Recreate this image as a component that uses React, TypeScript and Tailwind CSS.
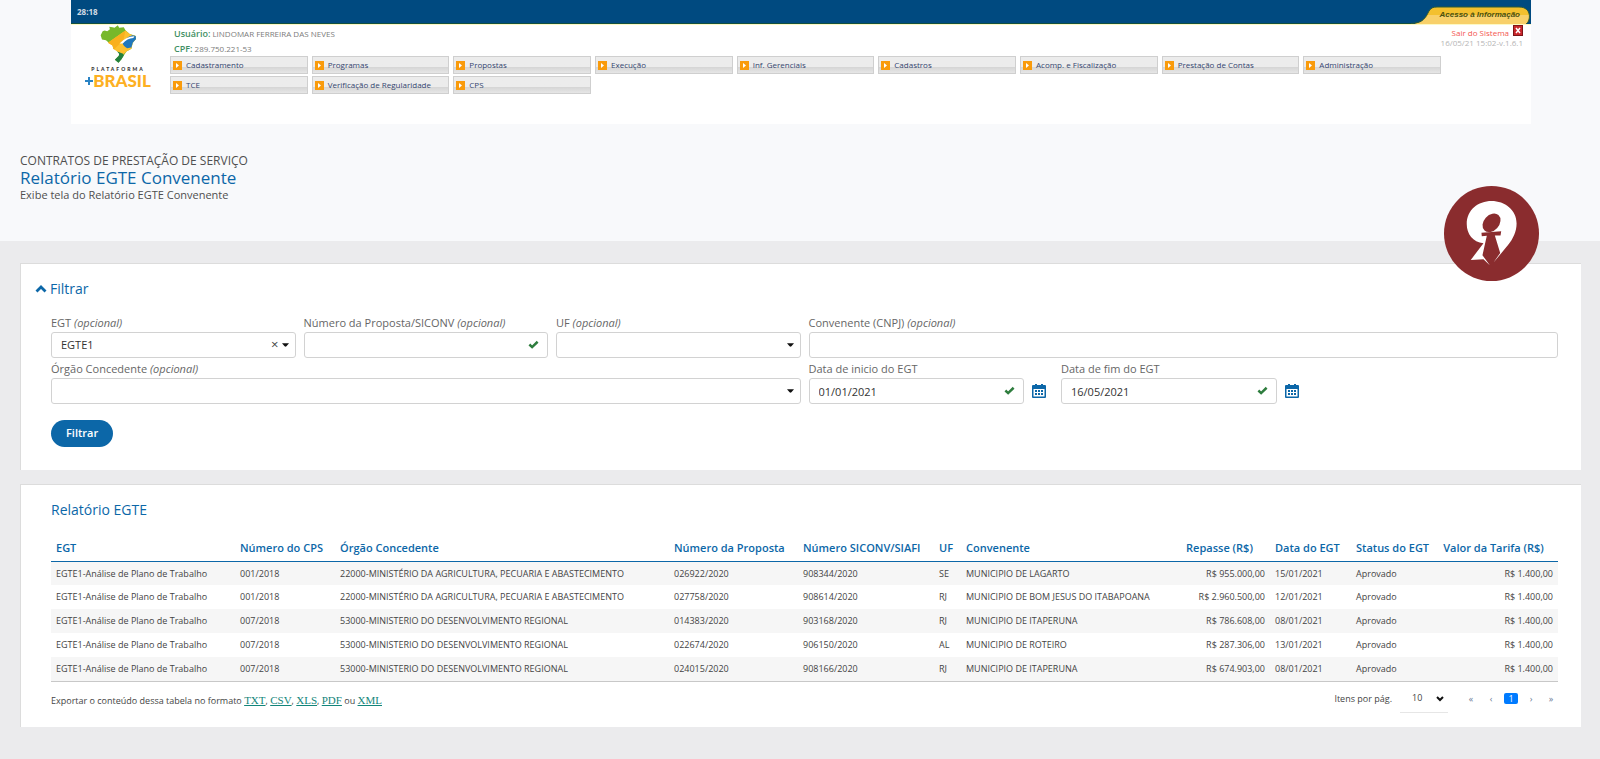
import React, { useState } from "react";

type FieldProps = {
  id: string;
  label: string;
  optional?: boolean;
  className?: string;
  children: React.ReactNode;
};

const menuItems = [
  "Cadastramento",
  "Programas",
  "Propostas",
  "Execução",
  "Inf. Gerenciais",
  "Cadastros",
  "Acomp. e Fiscalização",
  "Prestação de Contas",
  "Administração",
  "TCE",
  "Verificação de Regularidade",
  "CPS",
];

const agricultura = "22000-MINISTÉRIO DA AGRICULTURA, PECUARIA E ABASTECIMENTO";
const regional = "53000-MINISTERIO DO DESENVOLVIMENTO REGIONAL";

const rows = [
  { cps: "001/2018", orgao: agricultura, proposta: "026922/2020", siafi: "908344/2020", uf: "SE", convenente: "MUNICIPIO DE LAGARTO", repasse: "R$ 955.000,00", data: "15/01/2021" },
  { cps: "001/2018", orgao: agricultura, proposta: "027758/2020", siafi: "908614/2020", uf: "RJ", convenente: "MUNICIPIO DE BOM JESUS DO ITABAPOANA", repasse: "R$ 2.960.500,00", data: "12/01/2021" },
  { cps: "007/2018", orgao: regional, proposta: "014383/2020", siafi: "903168/2020", uf: "RJ", convenente: "MUNICIPIO DE ITAPERUNA", repasse: "R$ 786.608,00", data: "08/01/2021" },
  { cps: "007/2018", orgao: regional, proposta: "022674/2020", siafi: "906150/2020", uf: "AL", convenente: "MUNICIPIO DE ROTEIRO", repasse: "R$ 287.306,00", data: "13/01/2021" },
  { cps: "007/2018", orgao: regional, proposta: "024015/2020", siafi: "908166/2020", uf: "RJ", convenente: "MUNICIPIO DE ITAPERUNA", repasse: "R$ 674.903,00", data: "08/01/2021" },
];

const inputClass =
  "block h-[26px] w-full appearance-none rounded-[3px] border border-[#d2d2d2] bg-white px-[9px] text-[11px] text-[#333333] outline-none";

const BrasilLogo: React.FC = () => (
  <div className="flex w-16 flex-col items-center">
    <svg viewBox="78 12 112 115" className="h-[38px] w-[37px]">
      <path
        d="M80 43 86 31 92 29 100 31 108 25 106 17 116 19 122 20 132 13 136 20 150 19 155 28 168 39 186 45 187 54 177 66 173 84 158 92 150 104 143 116 134 126 123 117 135 105 136 99 128 88 118 84 116 72 104 65 96 58 84 56Z"
        fill="#77b82a"
      />
      <path d="M155 29 168 39 186 45 187 54 177 66 173 84 158 92 148 102 130 92 118 84 116 74 102 66Z" fill="#fdc02f" />
      <path d="M155 29 149 58 120 86 116 74 102 66Z" fill="#f9b01e" />
      <path d="M136 99 130 92 148 99 150 104 143 116 134 126 123 117 135 105Z" fill="#23803f" />
      <path d="M186 45 187 54 177 66 173 80 160 82Q148 76 146 66 156 50 176 43Z" fill="#1f77bd" />
      <path d="M137 68Q156 47 182 46L179 51Q160 52 147 68Z" fill="#ffffff" />
    </svg>
    <span className="mt-[3px] font-['Lato',sans-serif] text-[5px] leading-[7px] font-black tracking-[2px] text-[#333333]">
      PLATAFORMA
    </span>
    <span className="flex items-center font-['Lato',sans-serif] text-[17px] leading-[15px] font-black text-[#fdb022]">
      <svg viewBox="0 0 8 8" className="h-2 w-2">
        <path d="M3 0h2v3h3v2H5v3H3V5H0V3h3z" fill="#2a83c4" />
      </svg>
      BRASIL
    </span>
  </div>
);

const MenuArrow: React.FC = () => (
  <svg viewBox="0 0 9 9" className="h-[9px] w-[9px] shrink-0">
    <rect width="9" height="9" fill="#f99b0c" />
    <path d="M3 2 6 4.500 3 7Z" fill="#ffffff" />
  </svg>
);

const Caret: React.FC = () => (
  <svg viewBox="0 0 8 4" className="pointer-events-none absolute right-[7px] bottom-[11px] h-1 w-[7px]">
    <path d="M0 0h8L5 3.500Q4 4.300 3 3.500Z" fill="#111111" />
  </svg>
);

const Check: React.FC = () => (
  <svg viewBox="0 0 12 9" className="pointer-events-none absolute right-[9px] bottom-[9px] h-[9px] w-[11px]">
    <path d="M1.500 4.500 4.500 7.300 10.500 1.500" fill="none" stroke="#2e7d3e" strokeWidth="2.700" />
  </svg>
);

const CalendarIcon: React.FC = () => (
  <svg viewBox="0 0 14 14" className="h-[14px] w-[14px]">
    <path
      d="M3 0h2v1h4V0h2v1h2q1 0 1 1v11q0 1-1 1H1q-1 0-1-1V2q0-1 1-1h2zM1.500 5v7.500h11V5z"
      fill="#0c67a8"
      fillRule="evenodd"
    />
    <path d="M3 6h2v2H3zM6 6h2v2H6zM9 6h2v2H9zM3 9h2v2H3zM6 9h2v2H6zM9 9h2v2H9z" fill="#0c67a8" />
  </svg>
);

const Field: React.FC<FieldProps> = ({ id, label, optional, className, children }) => (
  <div className={className}>
    <label htmlFor={id} className="block text-[11px] leading-[18px] text-[#666666]">
      {label} {optional && <em>(opcional)</em>}
    </label>
    {children}
  </div>
);

const DateField: React.FC<{ id: string; label: string; value: string }> = ({ id, label, value }) => (
  <Field id={id} label={label}>
    <div className="flex items-center gap-2">
      <div className="relative flex-1">
        <input id={id} defaultValue={value} className={inputClass} />
        <Check />
      </div>
      <button type="button" aria-label={"Calendário " + label} className="mr-[7px]">
        <CalendarIcon />
      </button>
    </div>
  </Field>
);

const Badge: React.FC = () => (
  <svg viewBox="0 0 284 284" className="absolute -top-[55px] right-[61px] h-[95px] w-[95px]">
    <circle cx="142" cy="142" r="142" fill="#8a2c2e" />
    <path
      d="M142 45C182 45 217 72 217 112 217 136 206 158 192 176L148 229 168 200 152 148 169 148 171 135 112 140 113 150 128 149 115 207 137 237 118 219 80 221 118 171C86 168 68 142 68 114 68 72 102 45 142 45Z"
      fill="#ffffff"
    />
    <ellipse cx="142" cy="110" rx="23" ry="31" transform="rotate(42 142 110)" fill="#8a2c2e" />
  </svg>
);

const ExportLink: React.FC<{ children: React.ReactNode }> = ({ children }) => (
  <a href="#exportar" className="font-['Liberation_Serif',serif] text-[11px] text-[#12857a] underline">
    {children}
  </a>
);

const App: React.FC = () => {
  const [egt, setEgt] = useState("EGTE1");

  return (
    <div className="min-h-screen bg-[#ebebed] font-['Open_Sans',sans-serif] text-[#444444]">
      <header className="h-[241px] bg-[#f8f9fb] pr-[69px] pl-[71px]">
        {/* System bar */}
        <div className="flex h-[25px] items-end justify-between border-b border-[#fdf9c4] bg-[#004a80]">
          <span className="flex h-6 flex-1 items-center border-b border-[#14503f] pl-[6px] text-[8px] font-bold text-[#d5dde5]">
            28:18
          </span>
          <a href="#acesso" className="relative flex h-[18px] w-[120px] items-center justify-end pr-[11px]">
            <svg viewBox="0 0 120 18" className="absolute inset-0 h-full w-full">
              <path d="M4 17.500C12 17 15 11 18 5 20 2 22 1 26 1H108C121 1 120 15 115 18H4Z" fill="#f3c02e" />
              <path d="M6 17.500C12 16 15 12 17 9H118Q118 15 115 18H4Z" fill="#f8d06a" />
              <path d="M0 17.500C12 17 15 11 18 5 20 2 22 1 26 1H108C121 1 120 15 115 18" fill="none" stroke="#2f5b34" />
            </svg>
            <span className="relative font-['Liberation_Sans',sans-serif] text-[8px] font-bold text-[#4a5010] italic">
              Acesso à Informação
            </span>
          </a>
        </div>

        {/* Logo, user and menu */}
        <div className="flex h-[99px] bg-white pl-[15px]">
          <BrasilLogo />
          <div className="ml-5 flex-1">
            <div className="flex h-[31px] justify-between">
              <div className="pt-px pl-1 text-[8px] leading-[15px] text-[#7c7c7c]">
                <p>
                  <span className="text-[9px] font-semibold text-[#3f8f63]">Usuário:</span> LINDOMAR FERREIRA DAS
                  NEVES
                </p>
                <p>
                  <span className="text-[9px] font-semibold text-[#3f8f63]">CPF:</span> 289.750.221-53
                </p>
              </div>
              <div className="pr-2 text-right text-[8px] leading-[10px]">
                <a href="#sair" className="flex items-end justify-end gap-1 text-[#f4574f]">
                  Sair do Sistema
                  <svg viewBox="0 0 10 11" className="mb-0.5 h-[11px] w-[10px]">
                    <rect width="10" height="11" fill="#7c1518" />
                    <rect x="1" y="1" width="8" height="9" fill="#c8262b" />
                    <path d="M3 3 7 8M7 3 3 8" stroke="#ffffff" strokeWidth="1.500" />
                  </svg>
                </a>
                <span className="block text-[#b5b5b5]">16/05/21 15:02-v.1.6.1</span>
              </div>
            </div>
            <nav className="mr-[90px] grid grid-cols-9 gap-x-1 gap-y-0.5">
              {menuItems.map((item) => (
                <a
                  key={item}
                  href="#menu"
                  className="flex h-[18px] items-center gap-1 border border-[#cfcfcf] bg-linear-to-b from-[#ececec] from-60% via-[#d6d6d6] via-65% to-[#e6e6e6] pl-[2px] text-[8px] whitespace-nowrap text-[#34456f]"
                >
                  <MenuArrow />
                  {item}
                </a>
              ))}
            </nav>
          </div>
        </div>
      </header>

      {/* Page title, drawn over the lower part of the header */}
      <div className="relative -mt-[88px] h-[88px] pl-5">
        <p className="text-[12px] leading-4 text-[#4f4f4f]">CONTRATOS DE PRESTAÇÃO DE SERVIÇO</p>
        <h1 className="text-[17px] leading-[18px] text-[#0c67a8]">Relatório EGTE Convenente</h1>
        <p className="text-[11px] leading-4 text-[#4f4f4f]">Exibe tela do Relatório EGTE Convenente</p>
        <div className="absolute right-0 bottom-0">
          <Badge />
        </div>
      </div>

      <main className="flex flex-col gap-[14px] pt-[22px] pr-[19px] pb-8 pl-5">
        {/* Filter */}
        <section className="h-[207px] border-t border-l border-[#dcdcdc] bg-white pr-[23px] pl-[30px]">
          <h2 className="-ml-4 pt-[15px]">
            <button type="button" className="flex items-center gap-[3px] text-[14px] leading-5 text-[#0c67a8]">
              <svg viewBox="0 0 12 8" className="h-2 w-3">
                <path d="M1.500 6.500 6 2 10.500 6.500" fill="none" stroke="#0c67a8" strokeWidth="2.800" />
              </svg>
              Filtrar
            </button>
          </h2>
          <form className="mt-[15px]" onSubmit={(e) => e.preventDefault()}>
            <div className="grid grid-cols-6 gap-x-2 gap-y-0.5">
              <Field id="egt" label="EGT" optional>
                <div className="relative">
                  <select id="egt" value={egt} onChange={(e) => setEgt(e.target.value)} className={inputClass}>
                    <option value="">&nbsp;</option>
                    <option value="EGTE1">EGTE1</option>
                  </select>
                  <button
                    type="button"
                    onClick={() => setEgt("")}
                    className="absolute top-[5px] right-[17px] text-[13px] leading-[14px]"
                  >
                    ×
                  </button>
                  <Caret />
                </div>
              </Field>
              <Field id="proposta" label="Número da Proposta/SICONV" optional>
                <div className="relative">
                  <input id="proposta" className={inputClass} />
                  <Check />
                </div>
              </Field>
              <Field id="uf" label="UF" optional>
                <div className="relative">
                  <select id="uf" className={inputClass} />
                  <Caret />
                </div>
              </Field>
              <Field id="cnpj" label="Convenente (CNPJ)" optional className="col-span-3">
                <input id="cnpj" className={inputClass} />
              </Field>
              <Field id="orgao" label="Órgão Concedente" optional className="col-span-3">
                <div className="relative">
                  <select id="orgao" className={inputClass} />
                  <Caret />
                </div>
              </Field>
              <DateField id="inicio" label="Data de inicio do EGT" value="01/01/2021" />
              <DateField id="fim" label="Data de fim do EGT" value="16/05/2021" />
            </div>
            <button
              type="submit"
              className="mt-4 h-[27px] rounded-full bg-[#0c67a8] px-[15px] text-[11px] font-semibold text-white"
            >
              Filtrar
            </button>
          </form>
        </section>

        {/* Report */}
        <section className="h-[243px] border-t border-l border-[#dcdcdc] bg-white pr-[23px] pl-[30px]">
          <h2 className="pt-[15px] text-[14px] leading-5 text-[#0c67a8]">Relatório EGTE</h2>
          <table className="mt-[15px] w-full table-fixed text-left text-[9px] whitespace-nowrap">
            <colgroup>
              <col className="w-[184px]" />
              <col className="w-[100px]" />
              <col />
              <col className="w-[129px]" />
              <col className="w-[136px]" />
              <col className="w-[27px]" />
              <col className="w-[208px]" />
              <col className="w-[101px]" />
              <col className="w-[81px]" />
              <col className="w-[78px]" />
              <col className="w-[129px]" />
            </colgroup>
            <thead>
              <tr className="h-[26px] border-b border-[#0c67a8] text-[11px] text-[#0c67a8] *:px-[5px] *:font-semibold">
                <th>EGT</th>
                <th>Número do CPS</th>
                <th>Órgão Concedente</th>
                <th>Número da Proposta</th>
                <th>Número SICONV/SIAFI</th>
                <th>UF</th>
                <th>Convenente</th>
                <th className="text-center">Repasse (R$)</th>
                <th>Data do EGT</th>
                <th>Status do EGT</th>
                <th className="text-center">Valor da Tarifa (R$)</th>
              </tr>
            </thead>
            <tbody className="border-b border-[#c8c8c8]">
              {rows.map((row) => (
                <tr key={row.proposta} className="h-6 odd:bg-[#f6f6f6] *:px-[5px]">
                  <td>EGTE1-Análise de Plano de Trabalho</td>
                  <td>{row.cps}</td>
                  <td>{row.orgao}</td>
                  <td>{row.proposta}</td>
                  <td>{row.siafi}</td>
                  <td>{row.uf}</td>
                  <td>{row.convenente}</td>
                  <td className="text-right">{row.repasse}</td>
                  <td>{row.data}</td>
                  <td>Aprovado</td>
                  <td className="text-right">R$ 1.400,00</td>
                </tr>
              ))}
            </tbody>
          </table>

          {/* Export and pagination */}
          <div className="flex h-[31px] items-end justify-between text-[9px]">
            <p className="leading-6">
              Exportar o conteúdo dessa tabela no formato <ExportLink>TXT</ExportLink>, <ExportLink>CSV</ExportLink>,{" "}
              <ExportLink>XLS</ExportLink>, <ExportLink>PDF</ExportLink> ou <ExportLink>XML</ExportLink>
            </p>
            <div className="flex items-center">
              <label htmlFor="itens">Itens por pág.</label>
              <div className="relative ml-2 border-b border-[#e6e6e6]">
                <select id="itens" className="block h-[27px] w-12 appearance-none pl-3 text-[9px] outline-none">
                  <option>10</option>
                </select>
                <svg viewBox="0 0 8 6" className="pointer-events-none absolute top-[11px] right-1 h-[6px] w-2">
                  <path d="M1 1 4 4 7 1" fill="none" stroke="#111111" strokeWidth="2" />
                </svg>
              </div>
              <nav className="ml-4 flex items-center gap-1.5 text-[9px] leading-[11px] text-[#6a7a96] *:h-[11px] *:w-3.5">
                <button type="button">«</button>
                <button type="button">‹</button>
                <button type="button" className="rounded-xs bg-[#007bff] text-white">
                  1
                </button>
                <button type="button">›</button>
                <button type="button">»</button>
              </nav>
            </div>
          </div>
        </section>
      </main>
    </div>
  );
};

export default App;
